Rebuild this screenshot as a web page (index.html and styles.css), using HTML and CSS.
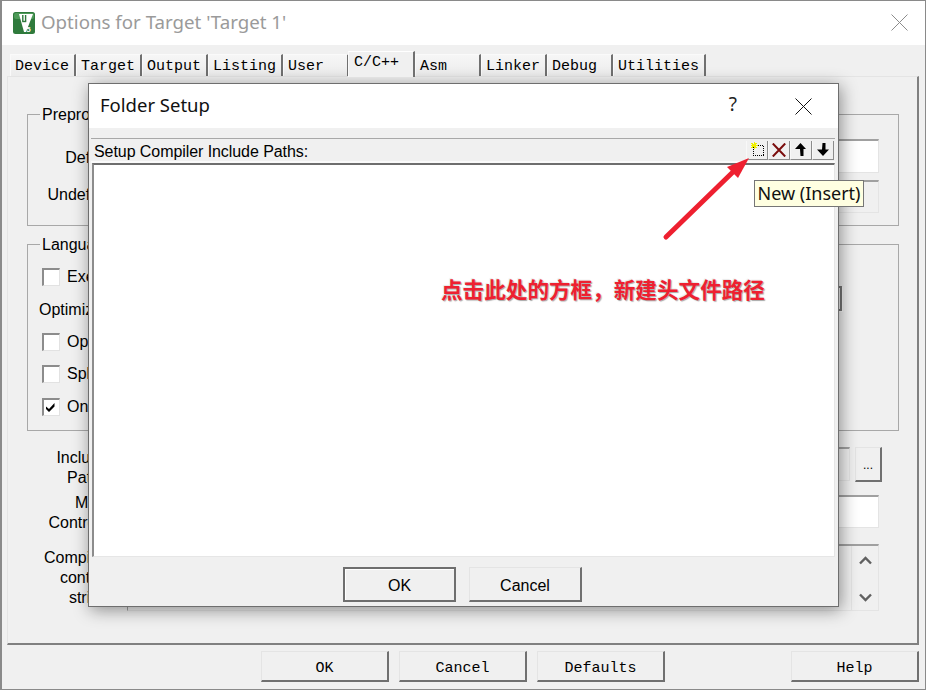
FILE: index.html
```html
<!DOCTYPE html>
<html lang="en">
<head>
<meta charset="utf-8">
<title>Options for Target</title>
<link rel="stylesheet" href="styles.css">
</head>
<body>
<div class="window">
  <header class="titlebar">
    <svg class="logo" width="22" height="22" viewBox="0 0 22 22">
      <rect x="0" y="0" width="22" height="22" rx="2.500" fill="#2f7a3c"/>
      <rect x="1" y="1" width="20" height="6" rx="2" fill="#4d9a58"/>
      <polygon points="6,2 20,2 13,20 11,20" fill="#fff"/>
      <path d="M9.800 3v6.500M12.600 3v6.500" stroke="#2f7a3c" stroke-width="1.400" fill="none"/>
      <path d="M9.200 9.500h4" stroke="#2f7a3c" stroke-width="1.400"/>
      <text x="13.200" y="19.500" class="logo-text">5</text>
    </svg>
    <span class="title-text">Options for Target 'Target 1'</span>
    <svg class="close" width="17" height="17" viewBox="0 0 17 17"><path d="M.5.5l16 16M16.500.5l-16 16" stroke="#8c8c8c" fill="none"/></svg>
  </header>

  <nav class="tabs">
    <span class="tab">Device</span>
    <span class="tab">Target</span>
    <span class="tab">Output</span>
    <span class="tab tab-wide">Listing</span>
    <span class="tab">User</span>
    <span class="tab tab-active">C/C++</span>
    <span class="tab">Asm</span>
    <span class="tab">Linker</span>
    <span class="tab">Debug</span>
    <span class="tab tab-util">Utilities</span>
  </nav>

  <main class="panel">
    <fieldset class="group group-pre">
      <legend>Preprocessor Symbols</legend>
      <div class="row row-define"><label class="lbl">Define:</label><div class="field field-white"></div></div>
      <div class="row row-undefine"><label class="lbl">Undefine:</label><div class="field field-grey"></div></div>
    </fieldset>

    <fieldset class="group group-lang">
      <legend>Language / Code Generation</legend>
      <div class="check check-first"><span class="box"></span>Execute-only Code</div>
      <div class="optim">Optimization:<span class="combo"></span></div>
      <div class="check check-op"><span class="box"></span>Optimize for Time</div>
      <div class="check check-sp"><span class="box"></span>Split Load and Store</div>
      <div class="check check-on"><span class="box"><svg class="tick" width="9" height="9" viewBox="0 0 9 9"><path d="M0 3.500l3 2.500L8.500 0v3.500L3 9 0 6z" fill="#000"/></svg></span>One ELF Section per Function</div>
    </fieldset>

    <div class="row row-inc">
      <label class="lbl2">Include<br>Paths</label>
      <div class="field field-inc"></div>
      <span class="dots">...</span>
    </div>
    <div class="row row-misc">
      <label class="lbl2">Misc<br>Controls</label>
      <div class="field field-misc"></div>
    </div>
    <div class="row row-str">
      <label class="lbl2">Compiler<br>control<br>string</label>
      <div class="field field-str">
        <div class="scroll">
          <svg width="13" height="9" viewBox="0 0 13 9"><path d="M1 7.500l5.500-5.500 5.500 5.500" stroke="#606060" stroke-width="2.400" fill="none"/></svg>
          <svg width="13" height="9" viewBox="0 0 13 9"><path d="M1 1.500l5.500 5.500 5.500-5.500" stroke="#606060" stroke-width="2.400" fill="none"/></svg>
        </div>
      </div>
    </div>
  </main>

  <footer class="footer">
    <span class="btn">OK</span>
    <span class="btn">Cancel</span>
    <span class="btn">Defaults</span>
    <span class="btn btn-help">Help</span>
  </footer>
</div>

<section class="dialog">
  <header class="dlg-title">
    <span class="dlg-name">Folder Setup</span>
    <span class="dlg-help">?</span>
    <svg width="17" height="17" viewBox="0 0 17 17"><path d="M.5.5l16 16M16.500.5l-16 16" stroke="#111" fill="none"/></svg>
  </header>
  <div class="toolbar">
    <span class="toolbar-label">Setup Compiler Include Paths:</span>
    <div class="tools">
      <span class="tool">
        <svg width="15" height="15" viewBox="0 0 15 15">
          <rect class="crisp" x="3.500" y="3.500" width="10" height="10" fill="none" stroke="#000" stroke-dasharray="1 1"/>
          <path class="crisp" d="M4 0v7M.5 3.500h7M1.500 1l5 5M6.500 1l-5 5" stroke="#f0f000" fill="none"/>
        </svg>
      </span>
      <span class="tool">
        <svg width="14" height="14" viewBox="0 0 14 14"><path d="M.8 .5l12.400 13M13.200 .5L.8 13.500" stroke="#7a0c0c" stroke-width="2" fill="none"/></svg>
      </span>
      <span class="tool">
        <svg width="12" height="13" viewBox="0 0 12 13"><path d="M5.500 0L11 6H8.500V13H5.500L5 6H0z" fill="#000"/></svg>
      </span>
      <span class="tool">
        <svg width="12" height="13" viewBox="0 0 12 13"><path d="M6 13L12 6.500H8.500V0H5.500L5 6.500H0z" fill="#000"/></svg>
      </span>
    </div>
  </div>
  <div class="list"></div>
  <footer class="dlg-footer">
    <span class="dlg-btn dlg-btn-default">OK</span>
    <span class="dlg-btn">Cancel</span>
  </footer>
</section>

<div class="tooltip">New (Insert)</div>

<svg class="arrow" width="100" height="90" viewBox="0 0 100 90">
  <path d="M6 82L74 16" stroke="#ee2030" stroke-width="5" stroke-linecap="round" fill="none"/>
  <polygon points="89,3 67,12 78,23" fill="#ee2030"/>
</svg>

<div class="note">点击此处的方框，新建头文件路径</div>
</body>
</html>
```

FILE: styles.css
```css
* { box-sizing: border-box; }
html, body { margin: 0; padding: 0; }
body {
  width: 926px;
  height: 690px;
  overflow: hidden;
  position: relative;
  font-family: "Liberation Sans", Arial, sans-serif;
  font-size: 16px;
  color: #000;
  background: #f0f0f0;
}
.window {
  width: 926px;
  height: 690px;
  border: 1px solid #8a8a8a;
  border-left-width: 2px;
  display: flex;
  flex-direction: column;
  background: #f0f0f0;
}
.titlebar {
  height: 44px;
  flex: none;
  background: #fff;
  display: flex;
  align-items: center;
  padding: 0 17px 0 11px;
}
.logo { flex: none; margin-right: 6px; margin-top: -1px; }
.logo-text { font: bold 8px "Liberation Sans", sans-serif; fill: #fff; }
.title-text {
  font-family: "Noto Sans", sans-serif;
  font-size: 18.700px;
  color: #9a9a9a;
  flex: 1;
  margin-top: -4px;
}
.close { flex: none; margin-top: -1px; }

.tabs {
  height: 31px;
  flex: none;
  display: flex;
  align-items: flex-end;
  padding-left: 8px;
  font-family: "Liberation Mono", monospace;
  font-size: 15px;
  color: #000;
}
.tab {
  width: 66px;
  height: 22px;
  padding-left: 4px;
  line-height: 23px;
  border-top: 1px solid #fafafa;
  border-left: 1px solid #fafafa;
  border-right: 2px solid #707070;
  background: linear-gradient(#f6f6f6, #ececec);
  white-space: pre;
}
.tab-wide { width: 75px; }
.tab-active {
  width: 67px;
  height: 26px;
  padding-left: 5px;
  line-height: 21px;
  margin-left: -1px;
  background: #f0f0f0;
  position: relative;
  z-index: 1;
  margin-bottom: -1px;
  border-top: 1px solid #fff;
}
.tab-util { width: 93px; }

.panel {
  flex: none;
  height: 569px;
  margin: 0 6px 0 5px;
  border: 1px solid #e4e4e4;
  border-right: 2px solid #808080;
  border-bottom: 2px solid #808080;
  padding: 26px 18px 0 19px;
  display: flex;
  flex-direction: column;
}
.group {
  margin: 0;
  padding: 0;
  border: 1px solid #a8a8a8;
  min-width: 0;
  position: relative;
}
.group legend {
  margin-left: 12px;
  padding: 2px 2px 0;
  line-height: 20px;
}
.group-pre { height: 123px; padding-right: 19px; }
.group-lang { height: 198px; margin-top: 7px; padding-left: 14px; }
.group-lang legend { margin-left: -2px; }
.row { display: flex; }
.lbl { width: 88px; text-align: right; flex: none; padding-top: 10px; }
.row-define { height: 34px; margin-top: 14px; }
.row-undefine { height: 33px; margin-top: 7px; }
.row-undefine .lbl { padding-top: 6px; }
.field {
  flex: 1;
  margin-left: 11px;
  border: 1px solid #e4e4e4;
  border-top: 2px solid #a0a0a0;
  border-left: 1px solid #a0a0a0;
}
.field-white { background: #fff; }
.field-grey { background: #f0f0f0; }

.check { display: flex; align-items: center; height: 18px; white-space: nowrap; }
.box {
  width: 18px;
  height: 18px;
  flex: none;
  margin-right: 7px;
  background: #fff;
  border: 1px solid #e2e2e2;
  border-top: 2px solid #8c8c8c;
  border-left: 2px solid #8c8c8c;
  display: flex;
  align-items: center;
  justify-content: center;
}
.tick { margin: 0 2px 1px 0; }
.crisp { shape-rendering: crispEdges; }
.check-first { margin-top: 13px; }
.optim { margin: 14px 0 0 -3px; height: 20px; line-height: 20px; position: relative; }
.check-op { margin-top: 13px; }
.check-sp { margin-top: 14px; }
.check-on { margin-top: 15px; }
.combo {
  position: absolute;
  left: 796px;
  top: -14px;
  width: 7px;
  height: 25px;
  background: #f0f0f0;
  border: 2px solid #777;
  border-left: 0;
  box-shadow: 1px 1px #f8f8f8;
}

.lbl2 { width: 81px; flex: none; text-align: right; line-height: 20px; padding-top: 1px; }
.row-inc { height: 35px; margin: 16px 17px 0 0; }
.field-inc { flex: 1; height: 34px; margin-left: 19px; margin-right: 5px; }
.dots {
  width: 27px;
  flex: none;
  border: 1px solid #e4e4e4;
  border-right: 2px solid #707070;
  border-bottom: 2px solid #707070;
  text-align: center;
  line-height: 34px;
  font-size: 12px;
}
.row-misc { height: 33px; margin: 13px 20px 0 0; }
.row-misc .lbl2 { margin-top: -3px; }
.field-misc { margin-left: 19px; background: #fff; }
.row-str { height: 67px; margin: 16px 20px 0 0; }
.row-str .lbl2 { padding-top: 4px; }
.field-str { margin-left: 19px; display: flex; justify-content: flex-end; background: #f0f0f0; }
.scroll {
  width: 27px;
  border-left: 1px solid #e4e4e4;
  display: flex;
  flex-direction: column;
  align-items: center;
  justify-content: space-between;
  padding: 10px 0 8px;
}

.footer {
  flex: 1;
  display: flex;
  padding: 6px 0 0 259px;
  font-family: "Liberation Mono", monospace;
  font-size: 15px;
}
.btn {
  width: 128px;
  height: 31px;
  margin-right: 10px;
  border: 1px solid #e4e4e4;
  border-right: 2px solid #707070;
  border-bottom: 2px solid #707070;
  text-align: center;
  line-height: 34px;
}
.btn-help { margin-left: 116px; margin-right: 0; }

.dialog {
  position: absolute;
  left: 88px;
  top: 83px;
  width: 751px;
  height: 524px;
  border: 1px solid #6e6e6e;
  background: #f0f0f0;
  box-shadow: 2px 3px 16px rgba(0, 0, 0, .42);
  display: flex;
  flex-direction: column;
}
.dlg-title {
  height: 44px;
  flex: none;
  background: #fff;
  display: flex;
  align-items: center;
  padding: 0 26px 0 11px;
}
.dlg-name { font-family: "Noto Sans", sans-serif; font-size: 18.500px; color: #111; flex: 1; margin-top: -4px; }
.dlg-help { font-family: "Noto Sans", sans-serif; font-size: 19px; color: #222; margin-right: 58px; margin-top: -4px; }
.toolbar {
  margin: 10px 3px 0 2px;
  height: 25px;
  flex: none;
  border-top: 1px solid #a8a8a8;
  border-bottom: 2px solid #fafafa;
  display: flex;
  align-items: center;
  padding: 0 1px 0 3px;
}
.toolbar-label { flex: 1; letter-spacing: -.07px; margin-top: 3px; }
.tools { display: flex; }
.tool {
  width: 22px;
  height: 19px;
  border-left: 1px solid #f8f8f8;
  border-right: 1px solid #8c8c8c;
  border-bottom: 1px solid #8c8c8c;
  display: flex;
  align-items: center;
  justify-content: center;
}
.list {
  flex: none;
  height: 394px;
  margin: 0 3px 0 3px;
  background: #fff;
  border-top: 2px solid #6e6e6e;
  border-left: 2px solid #8c8c8c;
  border-right: 1px solid #e6e6e6;
  border-bottom: 1px solid #e6e6e6;
}
.dlg-footer {
  flex: 1;
  display: flex;
  gap: 13px;
  padding: 10px 0 0 254px;
}
.dlg-btn {
  width: 113px;
  height: 35px;
  border: 1px solid #e4e4e4;
  border-right: 2px solid #707070;
  border-bottom: 2px solid #707070;
  text-align: center;
  line-height: 35px;
}
.dlg-btn-default { border: 2px solid #6e6e6e; line-height: 33px; box-shadow: inset 1px 1px #fff; }

.tooltip {
  position: absolute;
  left: 754px;
  top: 180px;
  width: 110px;
  height: 27px;
  background: #ffffe1;
  border: 1px solid #767676;
  font-family: "Noto Sans", sans-serif;
  font-size: 18px;
  line-height: 24px;
  text-align: center;
  color: #111;
  white-space: nowrap;
}
.arrow { position: absolute; left: 660px; top: 155px; }
.note {
  position: absolute;
  left: 441px;
  top: 273px;
  font-family: "Noto Sans CJK SC", sans-serif;
  font-weight: 700;
  font-size: 21.600px;
  line-height: 32px;
  color: #ee2030;
  white-space: nowrap;
  text-shadow: 1px 1px 1px #a8a8a8, -1px -1px 1px #e8e8e8;
}
```
